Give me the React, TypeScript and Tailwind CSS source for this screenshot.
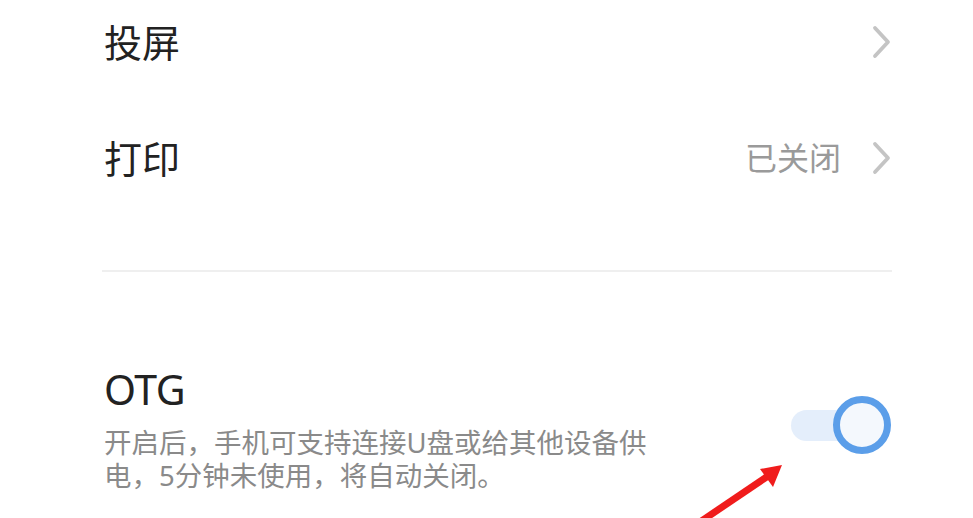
import React from 'react';

const Chevron = () => (
  <svg width="20" height="34" viewBox="0 0 20 34" className="ml-[30px]">
    <path d="M4 3 L17 17 L4 31" fill="none" stroke="#c4c4c4" strokeWidth="3.8" strokeLinecap="round" strokeLinejoin="round" />
  </svg>
);

const Row = ({ title, value }: { title: string; value?: string }) => (
  <div className="h-[116px] flex items-center justify-between">
    <span className="text-[38px] text-[#222]">{title}</span>
    <div className="flex items-center">
      {value && <span className="text-[32px] text-[#9a9a9a]">{value}</span>}
      <Chevron />
    </div>
  </div>
);

const App = () => {
  return (
    <div
      className="relative w-[973px] h-[518px] overflow-hidden bg-white"
      style={{ fontFamily: '"Noto Sans", "Noto Sans CJK SC", sans-serif' }}
    >
      <div className="pl-[104px] pr-[82px] mt-[-16px]">
        <Row title="投屏" />
        <Row title="打印" value="已关闭" />
      </div>
      <div className="mx-[102px] mt-[54px] mr-[81px] h-[2px] bg-[#efefef]" />
      <div className="pl-[104px] pr-[82px] pt-[94px] flex items-start justify-between">
        <div>
          <div className="text-[41px] leading-[46px] text-[#222] tracking-[-0.5px]">OTG</div>
          <div className="mt-[14px] w-[560px] text-[27.5px] leading-[33px] text-[#8a8a8a]">
            开启后，手机可支持连接U盘或给其他设备供电，5分钟未使用，将自动关闭。
          </div>
        </div>
        <div className="relative mt-[30px] w-[100px] h-[58px] flex items-center">
          <div className="ml-0 w-[76px] h-[31px] rounded-full bg-[#e4eefb]" />
          <div className="absolute right-0 top-0 w-[58px] h-[58px] rounded-full border-[7px] border-[#5b9ee9] bg-[#f4f8fd]" />
        </div>
      </div>
      <svg className="absolute left-0 top-0" width="973" height="518" viewBox="0 0 973 518">
        <line x1="700" y1="522" x2="768" y2="476" stroke="#f01c1c" strokeWidth="7" />
        <polygon points="782,465 760,469 773,487" fill="#f01c1c" />
      </svg>
    </div>
  );
};

export default App;
